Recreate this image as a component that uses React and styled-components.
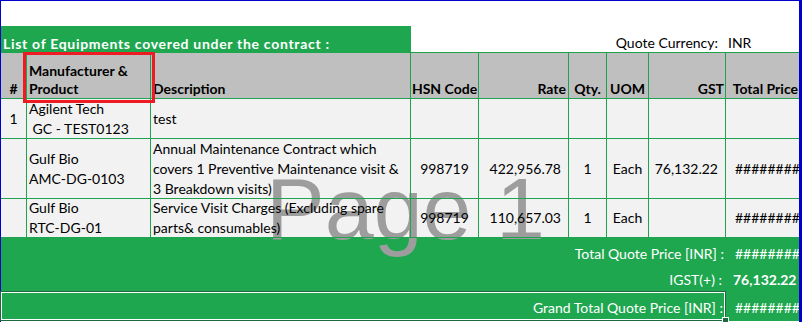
import React from 'react';
import styled, { createGlobalStyle } from 'styled-components';

const GlobalStyle = createGlobalStyle`
  html, body {
    margin: 0;
    padding: 0;
    background: #ffffff;
  }
  body {
    font-family: Lato, 'Liberation Sans', sans-serif;
    font-size: 14px;
    color: #000;
  }
`;

const COLS = '26px 124px 260px 68px 90px 38px 42px 77px 73px';
const GRID_GREEN = '#1ea34f';
const FILL_GREEN = '#1fa750';

const Page = styled.div`
  position: relative;
  width: 802px;
  height: 322px;
  box-sizing: border-box;
  border-top: 1px solid #0000cd;
  border-left: 1px solid #0000cd;
  border-right: 3px solid #0000cd;
`;

const Row = styled.div`
  display: grid;
  grid-template-columns: ${COLS};
  height: ${(p) => p.$h}px;
  background: ${(p) => p.$bg || 'transparent'};
`;

const justify = { left: 'flex-start', center: 'center', right: 'flex-end' };

const Cell = styled.div`
  position: relative;
  z-index: 2;
  box-sizing: border-box;
  display: flex;
  align-items: ${(p) => (p.$bottom ? 'flex-end' : 'center')};
  justify-content: ${(p) => justify[p.$align || 'left']};
  text-align: ${(p) => p.$align || 'left'};
  grid-column: ${(p) => p.$span || 'auto'};
  padding: 0 ${(p) => (p.$pr != null ? p.$pr : 2)}px ${(p) => p.$pb || 0}px
    ${(p) => (p.$pl != null ? p.$pl : 2)}px;
  border-right: ${(p) => (p.$grid && !p.$last ? `1px solid ${GRID_GREEN}` : 'none')};
  border-bottom: ${(p) => (p.$grid || p.$line ? `1px solid ${GRID_GREEN}` : 'none')};
  white-space: pre;
  overflow: hidden;
  line-height: ${(p) => (p.$bottom ? 18 : 20)}px;
`;

const HeadCell = styled(Cell)`
  font-weight: 700;
`;

const TitleCell = styled(Cell)`
  background: ${FILL_GREEN};
  color: #fff;
  font-weight: 700;
  letter-spacing: 0.7px;
`;

const FootCell = styled(Cell)`
  color: #fff;
  font-weight: ${(p) => (p.$bold ? 700 : 400)};
`;

const GrandCell = styled(FootCell)`
  margin-left: -1px;
  border: 1px solid #1b6b3e;
  box-shadow: inset 0 0 0 1px #ffffff;
  overflow: visible;
`;

const FillHandle = styled.span`
  position: absolute;
  right: -4px;
  bottom: -4px;
  width: 5px;
  height: 5px;
  background: #1b6b3e;
  border: 1px solid #ffffff;
`;

const Lines = styled.div`
  white-space: pre;
`;

const RedMark = styled.div`
  position: absolute;
  left: 22px;
  top: 51px;
  width: 132px;
  height: 51px;
  box-sizing: border-box;
  border: 3px solid #ed1c24;
  z-index: 3;
`;

const Watermark = styled.div`
  position: absolute;
  left: 265px;
  top: 158px;
  z-index: 1;
  font-family: 'Liberation Sans', Arial, sans-serif;
  font-size: 88px;
  line-height: 100px;
  color: #9d9d9d;
  white-space: pre;
`;

const items = [
  {
    no: '1',
    product: 'Agilent Tech\n GC - TEST0123',
    desc: 'test',
    hsn: '',
    rate: '',
    qty: '',
    uom: '',
    gst: '',
    total: '',
    h: 40,
  },
  {
    no: '',
    product: 'Gulf Bio\nAMC-DG-0103',
    desc: 'Annual Maintenance Contract which\ncovers 1 Preventive Maintenance visit &\n3 Breakdown visits)',
    hsn: '998719',
    rate: '422,956.78',
    qty: '1',
    uom: 'Each',
    gst: '76,132.22',
    total: '##########',
    h: 60,
  },
  {
    no: '',
    product: 'Gulf Bio\nRTC-DG-01',
    desc: 'Service Visit Charges (Excluding spare\nparts& consumables)',
    hsn: '998719',
    rate: '110,657.03',
    qty: '1',
    uom: 'Each',
    gst: '',
    total: '##########',
    h: 39,
  },
];

const App = () => (
  <>
    <GlobalStyle />
    <Page>
      <Row $h={25} />

      <Row $h={27}>
        <TitleCell $span="1 / 4" $bottom $pl={2}>
          List of Equipments covered under the contract :
        </TitleCell>
        <Cell $span="4 / 9" $bottom $align="right" $pr={8} $line>
          Quote Currency:
        </Cell>
        <Cell $bottom $line>INR</Cell>
      </Row>

      <Row $h={46} $bg="#bfbfbf">
        <HeadCell $grid $bottom $align="center">#</HeadCell>
        <HeadCell $grid $bottom>
          <Lines>{'Manufacturer &\nProduct'}</Lines>
        </HeadCell>
        <HeadCell $grid $bottom>Description</HeadCell>
        <HeadCell $grid $bottom $align="center">HSN Code</HeadCell>
        <HeadCell $grid $bottom $align="right">Rate</HeadCell>
        <HeadCell $grid $bottom $align="center">Qty.</HeadCell>
        <HeadCell $grid $bottom $align="center">UOM</HeadCell>
        <HeadCell $grid $bottom $align="right" $pr={1}>GST</HeadCell>
        <HeadCell $grid $bottom $last $align="right" $pr={1}>Total Price</HeadCell>
      </Row>

      {items.map((it, i) => (
        <Row key={i} $h={it.h} $bg="#f2f2f2">
          <Cell $grid $align="center">{it.no}</Cell>
          <Cell $grid>
            <Lines>{it.product}</Lines>
          </Cell>
          <Cell $grid>
            <Lines>{it.desc}</Lines>
          </Cell>
          <Cell $grid $align="center">{it.hsn}</Cell>
          <Cell $grid $align="right" $pr={7}>{it.rate}</Cell>
          <Cell $grid $align="center">{it.qty}</Cell>
          <Cell $grid $align="center">{it.uom}</Cell>
          <Cell $grid $align="right" $pr={7}>{it.gst}</Cell>
          <Cell $grid $last $pl={9} $pr={0}>{it.total}</Cell>
        </Row>
      ))}

      <Row $h={25} $bg={FILL_GREEN}>
        <FootCell $span="1 / 9" $bottom $align="right" $pr={2}>
          Total Quote Price [INR] :
        </FootCell>
        <FootCell $bottom $pl={9} $pr={0}>##########</FootCell>
      </Row>

      <Row $h={28} $bg={FILL_GREEN}>
        <FootCell $span="1 / 9" $bottom $align="right" $pr={4} $pb={2}>
          IGST(+) :
        </FootCell>
        <FootCell $bottom $bold $pl={7} $pr={0} $pb={2}>76,132.22</FootCell>
      </Row>

      <Row $h={30} $bg={FILL_GREEN}>
        <GrandCell $span="1 / 9" $bottom $align="right" $pr={2} $pb={3}>
          Grand Total Quote Price [INR] :
          <FillHandle />
        </GrandCell>
        <FootCell $bottom $pl={9} $pr={0} $pb={4}>##########</FootCell>
      </Row>

      <Watermark>Page 1</Watermark>
      <RedMark />
    </Page>
  </>
);

export default App;
